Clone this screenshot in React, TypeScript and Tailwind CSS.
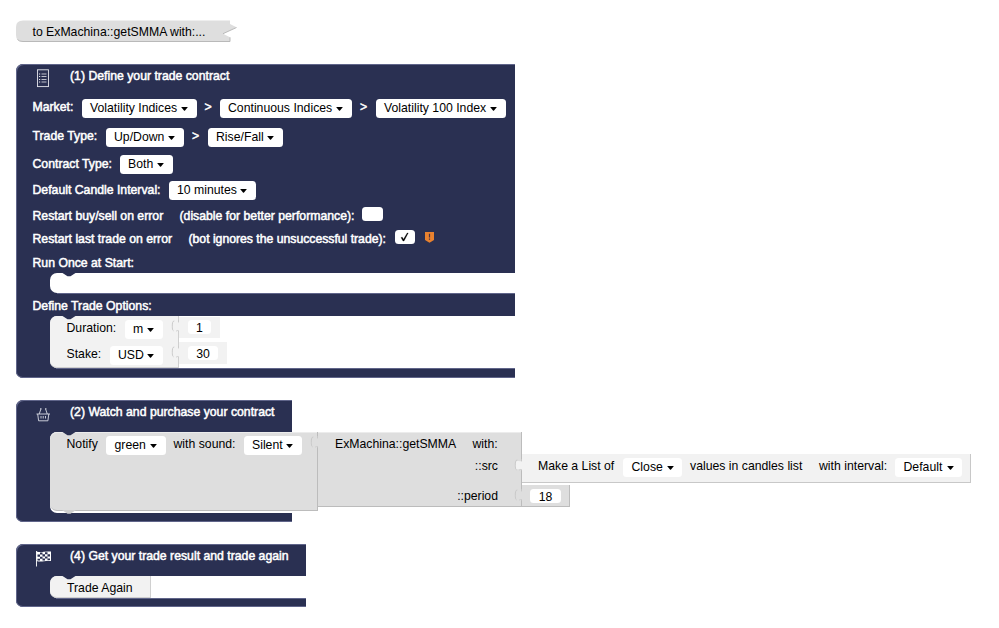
import React from "react";

type Kids = { children?: React.ReactNode; className?: string };

const Label = ({ children, className = "" }: Kids) => (
  <span className={`block shrink-0 whitespace-pre leading-[16px] ${className}`}>{children}</span>
);

const Bold = ({ children, className = "" }: Kids) => (
  <Label className={`text-white [-webkit-text-stroke:0.5px_#fff] ${className}`}>{children}</Label>
);

const Select = ({ children, className = "" }: Kids) => (
  <span
    className={`flex h-[19px] shrink-0 items-start justify-between rounded-[3.5px] bg-white pl-[8.5px] pr-[8.5px] leading-[18px] text-black ${className}`}
  >
    <span className="whitespace-pre">{children}</span>
    <svg className="mt-[8px] h-[4px] w-[7px]" viewBox="0 0 7 4">
      <path d="M.1 0h6.800L4 3.500q-.5.500-1 0z" fill="#000" />
    </svg>
  </span>
);

const Field = ({ children, className = "" }: Kids) => (
  <span className={`block h-[14px] shrink-0 rounded-[3.5px] bg-white text-center leading-[16px] text-black ${className}`}>
    {children}
  </span>
);

/* Dip in the top edge of a stacked block */
const Notch = ({ fill = "#2a3052" }: { fill?: string }) => (
  <svg className="absolute left-[12px] top-[-1px] h-[5px] w-[14px]" viewBox="0 0 14 5">
    <path d="M0 0V1H.5L5.5 4.3H8.5L13.5 1H14V0Z" fill={fill} />
  </svg>
);

/* Puzzle socket where a value block plugs in */
const Socket = ({ className = "", fill = "#dedede" }: { className?: string; fill?: string }) => (
  <svg className={`absolute h-[17px] w-[9px] ${className}`} viewBox="0 0 9 17">
    <path d="M9 3.500C5 6 1.300 1 1.300 8.200s3.700 2.300 7.700 4.800z" fill={fill} />
    <path d="M3.300 3C1.500 3 1.300 5 1.300 8.200c0 2.400.2 4.200 1.200 4.600" fill="none" stroke="#c6c6c6" strokeWidth=".9" />
    <path d="M7.500 2v2.500M5 13.200c1.500-.9 2.500-1 2.500.3" fill="none" stroke="#cacaca" strokeWidth=".8" />
  </svg>
);

const Header = ({ icon, title, className = "" }: { icon: React.ReactNode; title: string; className?: string }) => (
  <div className={`flex items-start ${className}`}>
    <span className="w-[54px] shrink-0">{icon}</span>
    <Bold className="mt-[4px]">{title}</Bold>
  </div>
);

/* Statement mouth cut into a container block */
const Mouth = ({ children, className = "" }: Kids) => (
  <div className={`flex ${className}`}>
    <div className="relative flex flex-1 items-start rounded-l-[7px] bg-white">{children}</div>
  </div>
);

const DocIcon = () => (
  <svg className="ml-[20px] mt-[5px] h-[19px] w-[14px]" viewBox="0 0 14 19" fill="none" stroke="#e4e5ec">
    <rect x="1.500" y=".8" width="11" height="16.800" strokeWidth=".9" />
    <path d="M5.500 5h5M5.500 7.500h5M5.500 10.500h5M5.500 13h5" strokeWidth=".8" />
    <path d="M3 5h1.200M3 7.500h1.200M3 10.500h1.200M3 13h1.200" strokeWidth="1" />
  </svg>
);

const BasketIcon = () => (
  <svg className="ml-[20px] mt-[8px] h-[14px] w-[15px]" viewBox="0 0 15 14" fill="none" stroke="#d9dbe5" strokeWidth=".9">
    <path d="M.5 6h13.500M1.700 6l.9 6.800h9.300L12.800 6M5 .8 3.200 6M9.500.8 11.300 6M4 .8h1.500M9 .8h1.500" />
    <path d="M5 8v2.500M7.200 8v2.500M9.500 8v2.500" />
  </svg>
);

const FlagIcon = () => (
  <svg className="ml-[20px] mt-[7px] h-[16px] w-[16px]" viewBox="0 0 16 16">
    <path d="M.5 0v15.500" stroke="#fff" strokeWidth=".9" />
    <path d="M.5.5Q4 1.500 8 .8T15 .6V10Q12 9.500 8 10.200T.5 10Z" fill="#fff" />
    <path
      d="M4 1.500h2.500v2H4zM9 1.200h2.500v2H9zM1.500 3.500H4v2.200H1.500zM6.500 3.300H9v2.200H6.500zM11.500 3.200H14v2.200h-2.500zM4 5.700h2.500v2H4zM9 5.500h2.500v2H9zM1.500 7.700H4v1.700H1.500zM6.500 7.600H9v1.800H6.500zM11.500 7.500H14v1.600h-2.500z"
      fill="#2a3052"
    />
  </svg>
);

const SHELL = "absolute flex flex-col overflow-visible rounded-l-[7px] bg-[#2a3052] shadow-[inset_1px_1px_0_#60658a,inset_0_-1px_0_#60658a]";

export default function App() {
  return (
    <main className="relative h-[628px] w-[999px] overflow-hidden bg-white font-['Liberation_Sans',Arial,sans-serif] text-[12.25px] text-black">
      {/* Collapsed function */}
      <section className="absolute left-[16px] top-[20px] h-[22px] w-[222px]">
        <svg className="absolute inset-0 h-[22px] w-[222px]" viewBox="0 0 222 22">
          <path d="M7 .5H214V4L220.500 7.300 207 13.700 214 17.300V21.700H7Q0 21.700 0 15V7Q0 .5 7 .5Z" fill="#dedede" />
          <path d="M220.500 7.500 207 13.700M214 17.300V21.500H7Q3 21.500 1.500 19.500" fill="none" stroke="#b9b9b9" />
        </svg>
        <Label className="relative pl-[16.5px] pt-[4px]">to ExMachina::getSMMA with:...</Label>
      </section>

      {/* Trade definition */}
      <section className={`${SHELL} left-[16px] top-[64px] h-[314px] w-[499px]`}>
        <Header className="h-[35px]" icon={<DocIcon />} title="(1) Define your trade contract" />
        <div className="flex h-[29px] pl-[16.5px]">
          <Bold className="w-[49px]">Market:</Bold>
          <Select className="w-[115px]">Volatility Indices</Select>
          <Bold className="w-[23px] text-center">&gt;</Bold>
          <Select className="w-[132px]">Continuous Indices</Select>
          <Bold className="w-[24px] text-center">&gt;</Bold>
          <Select className="w-[130px]">Volatility 100 Index</Select>
        </div>
        <div className="flex h-[27px] pl-[16.5px]">
          <Bold className="w-[73px]">Trade Type:</Bold>
          <Select className="w-[78px]">Up/Down</Select>
          <Bold className="w-[24px] text-center">&gt;</Bold>
          <Select className="w-[75px]">Rise/Fall</Select>
        </div>
        <div className="flex h-[26px] pl-[16.5px]">
          <Bold className="w-[87px] pt-px">Contract Type:</Bold>
          <Select className="w-[53px]">Both</Select>
        </div>
        <div className="flex h-[26px] pl-[16.5px]">
          <Bold className="w-[136px] pt-px">Default Candle Interval:</Bold>
          <Select className="w-[87px]">10 minutes</Select>
        </div>
        <div className="flex h-[23px] pl-[16.5px]">
          <Bold className="w-[147px] pt-px">Restart buy/sell on error</Bold>
          <Bold className="w-[182px] pt-px">(disable for better performance):</Bold>
          <Field className="w-[21px]" />
        </div>
        <div className="flex h-[24px] pl-[16.5px]">
          <Bold className="w-[156px] pt-px">Restart last trade on error</Bold>
          <Bold className="w-[206px] pt-px tracking-[-0.02px]">(bot ignores the unsuccessful trade):</Bold>
          <Field className="flex w-[20px] items-center justify-center">
            <svg className="h-[10px] w-[9px]" viewBox="0 0 9 10">
              <path d="M1 5.500 2.300 5.200 3.500 7.300 7.200 1H8.200L4 9H3Z" fill="#000" stroke="#000" strokeWidth=".3" />
            </svg>
          </Field>
          <svg className="ml-[10px] mt-[2px] h-[11px] w-[9px]" viewBox="0 0 9 11">
            <path d="M0 0H9V8L4.500 10.800 0 8Z" fill="#e8812f" />
            <path d="M4.500 1.800v3.700M4.500 6.500V7.800" stroke="#4a3040" strokeWidth="1.200" />
          </svg>
        </div>
        <div className="h-[19px] pl-[16.5px] pt-px">
          <Bold>Run Once at Start:</Bold>
        </div>
        <Mouth className="h-[20px] pl-[34px]">
          <Notch />
        </Mouth>
        <div className="h-[23px] pl-[16.5px]">
          <div className="ml-[24px] h-px bg-[#60658a]" />
          <Bold className="pt-[4px]">Define Trade Options:</Bold>
        </div>
        <Mouth className="h-[52px] pl-[34px]">
          <div className="relative h-[52px] w-[129px] rounded-l-[7px] border-b border-r border-[#cfcfcf] bg-[#f2f2f2] pt-[4px]">
            <div className="flex h-[26px] pl-[16.5px]">
              <Label className="w-[58px]">Duration:</Label>
              <Select className="w-[38px]">m</Select>
            </div>
            <div className="flex pl-[16.5px]">
              <Label className="w-[43px]">Stake:</Label>
              <Select className="w-[53px]">USD</Select>
            </div>
            <Socket className="left-[121px] top-[2px]" fill="#f2f2f2" />
            <Socket className="left-[121px] top-[28px]" fill="#f2f2f2" />
          </div>
          <Notch />
          <div className="flex flex-col gap-[4px] pt-[1px]">
            <div className="h-[21px] w-[41px] bg-[#f2f2f2] pl-[9px] pt-[3px]">
              <Field className="w-[23px]">1</Field>
            </div>
            <div className="h-[22px] w-[48px] bg-[#f2f2f2] pl-[9px] pt-[4px]">
              <Field className="w-[30px]">30</Field>
            </div>
          </div>
        </Mouth>
        <div className="ml-[40px] h-px bg-[#60658a]" />
      </section>

      {/* Purchase */}
      <section className={`${SHELL} left-[16px] top-[400px] h-[122px] w-[276px]`}>
        <Header className="h-[32px]" icon={<BasketIcon />} title="(2) Watch and purchase your contract" />
        <Mouth className="h-[81px] pl-[34px]">
          <div className="flex items-start">
            <div className="relative flex h-[79px] w-[268px] shrink-0 rounded-l-[7px] border-b border-r border-[#bcbcbc] bg-[#dedede] pl-[16.5px] pt-[4px] shadow-[inset_0_1px_0_#ececec]">
              <Label className="w-[39.5px]">Notify</Label>
              <Select className="w-[59.5px]">green</Select>
              <Label className="w-[78px] pl-[8px]">with sound:</Label>
              <Select className="w-[58px]">Silent</Select>
              <Socket className="left-[260px] top-[2px]" />
              <svg className="absolute left-[12px] top-[78px] h-[5px] w-[14px]" viewBox="0 0 14 5">
                <path d="M0 0 5.500 3.800H8.500L14 0Z" fill="#cfcfcf" />
              </svg>
            </div>
            <div className="relative flex h-[75px] w-[204px] shrink-0 flex-col border-b border-r border-[#bcbcbc] bg-[#dedede] pt-[4px] shadow-[inset_0_1px_0_#ececec]">
              <div className="flex h-[22px] pl-[17px]">
                <Label className="w-[137.5px]">ExMachina::getSMMA</Label>
                <Label>with:</Label>
              </div>
              <Label className="h-[30px] pr-[23px] text-right">::src</Label>
              <Label className="pr-[23px] text-right">::period</Label>
              <Socket className="left-[196px] top-[25px]" fill="#f2f2f2" />
              <Socket className="left-[196px] top-[55px]" />
            </div>
            <div className="flex shrink-0 flex-col gap-[2px] pt-[22px]">
              <div className="flex h-[29px] w-[449px] border-b border-r border-[#c8c8c8] bg-[#f2f2f2] pl-[16px] pt-[4px]">
                <Label className="w-[85px]">Make a List of</Label>
                <Select className="w-[59px]">Close</Select>
                <Label className="w-[137px] pl-[8px]">values in candles list</Label>
                <Label className="w-[76px]">with interval:</Label>
                <Select className="w-[67px]">Default</Select>
              </div>
              <div className="h-[22px] w-[48px] border-b border-r border-[#bcbcbc] bg-[#dedede] pl-[8px] pt-[4px]">
                <Field className="w-[31px]">18</Field>
              </div>
            </div>
          </div>
          <Notch />
        </Mouth>
      </section>

      {/* Trade again */}
      <section className={`${SHELL} left-[16px] top-[544px] h-[63px] w-[290px]`}>
        <Header className="h-[32px]" icon={<FlagIcon />} title="(4) Get your trade result and trade again" />
        <Mouth className="h-[22px] pl-[34px]">
          <div className="h-[22px] w-[101px] rounded-l-[7px] border-b border-r border-[#d0d0d0] bg-[#f2f2f2] pl-[17px] pt-[4px]">
            <Label>Trade Again</Label>
          </div>
          <Notch />
        </Mouth>
        <div className="ml-[40px] h-px bg-[#60658a]" />
      </section>
    </main>
  );
}
